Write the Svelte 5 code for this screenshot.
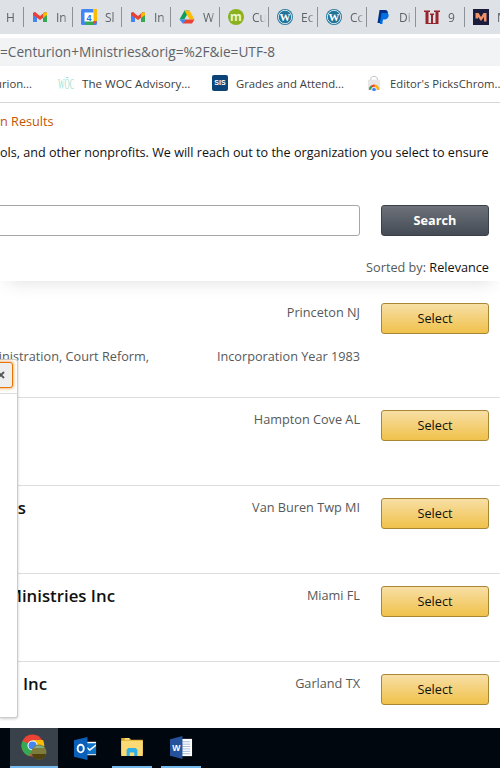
<script>
  const tabs = [
    { icon: '', title: 'H' },
    { icon: 'gmail', title: 'In' },
    { icon: 'cal', title: 'Sl' },
    { icon: 'gmail', title: 'In' },
    { icon: 'drive', title: 'W' },
    { icon: 'moz', title: 'Cu' },
    { icon: 'wp', title: 'Ec' },
    { icon: 'wp', title: 'Cc' },
    { icon: 'paypal', title: 'Di' },
    { icon: 'red', title: '9' },
    { icon: 'mm', title: 'M' }
  ];

  const rows = [
    { name: '', end: 0, place: 'Princeton NJ', first: true },
    { name: '', end: 0, place: 'Hampton Cove AL' },
    { name: 's', end: 26, place: 'Van Buren Twp MI' },
    { name: 'Ministries Inc', end: 115, place: 'Miami FL' },
    { name: 'Inc', end: 47, place: 'Garland TX' }
  ];
</script>

{#snippet tabIcon(kind)}
  {#if kind === 'gmail'}
    <svg viewBox="0 0 16 16" width="16" height="16">
      <path d="M1 13V4l2 -1 2 2v8z" fill="#4285f4" />
      <path d="M15 13V4l-2 -1 -2 2v8z" fill="#34a853" />
      <path d="M3 3l5 4 5 -4 2 1v2l-7 5 -7 -5V4z" fill="#ea4335" />
      <path d="M13 3l2 1v2l-4 3V5z" fill="#fbbc04" />
    </svg>
  {:else if kind === 'cal'}
    <svg viewBox="0 0 16 16" width="16" height="16">
      <rect width="16" height="16" rx="1.500" fill="#4285f4" />
      <rect x="12" y="0" width="4" height="12" fill="#fbbc04" />
      <rect x="4" y="12" width="8" height="4" fill="#34a853" />
      <path d="M12 12h4l-4 4z" fill="#ea4335" />
      <rect x="3.500" y="3.500" width="9" height="9" fill="#fff" />
      <text x="8" y="11.500" class="calnum">4</text>
    </svg>
  {:else if kind === 'drive'}
    <svg viewBox="0 0 16 16" width="16" height="16">
      <path d="M5.500 1.500h5L5.300 10.500H0.500z" fill="#0f9d58" />
      <path d="M10.500 1.500l5 9h-5l-5 -9z" fill="#fbbc04" />
      <path d="M3.700 14.500l2.500 -4h9.300l-2.500 4z" fill="#ea4335" />
      <path d="M0.500 10.500h5.200l2 0 -4 4z" fill="#4285f4" />
    </svg>
  {:else if kind === 'moz'}
    <svg viewBox="0 0 16 16" width="16" height="16">
      <circle cx="8" cy="8" r="8" fill="#8ab21d" />
      <text x="8" y="11.500" class="mozm">m</text>
    </svg>
  {:else if kind === 'wp'}
    <svg viewBox="0 0 16 16" width="16" height="16">
      <circle cx="8" cy="8" r="8" fill="#21759b" />
      <circle cx="8" cy="8" r="6.700" fill="none" stroke="#fff" stroke-width="0.800" />
      <text x="8" y="12" class="wpw">W</text>
    </svg>
  {:else if kind === 'paypal'}
    <svg viewBox="0 0 16 16" width="16" height="16">
      <path d="M4.500 1h5c3 0 4 2 3 4.500 -.7 2 -2.500 3 -4.500 3H6.500L5.500 14H2.500z" fill="#003087" />
      <path d="M6.500 4h4.500c2.500 0 3 1.500 2.500 3.500 -.6 2 -2 3 -4 3H8L7.300 15H4.800z" fill="#0070e0" />
    </svg>
  {:else if kind === 'red'}
    <svg viewBox="0 0 16 16" width="16" height="16" fill="#97252b">
      <path d="M0 1.500h6v1.500H4.500v11H7v-8H6V4.500h4V6H9v8h2.500V3H10V1.500h6V3h-1.500v12H1.500V3H0z" />
    </svg>
  {:else if kind === 'mm'}
    <svg viewBox="0 0 16 16" width="16" height="16">
      <rect width="16" height="16" fill="#191c3d" />
      <path d="M2.500 4h3l2.500 4 2.500 -4h3v8.500h-2.500V8L8 12 5 8v1.500H2.500z" fill="#f0916a" />
    </svg>
  {/if}
{/snippet}

<div class="screen">
  <div class="tabstrip">
    {#each tabs as tab, i}
      <div class="tab" class:first={i === 0}>
        {#if tab.icon}
          <span class="tab-icon">{@render tabIcon(tab.icon)}</span>
        {/if}
        <span class="tab-title">{tab.title}</span>
      </div>
    {/each}
  </div>

  <div class="addressbar">
    <div class="omnibox">=Centurion+Ministries&amp;orig=%2F&amp;ie=UTF-8</div>
  </div>

  <div class="bookmarks">
    <span class="bm bm-a">urion...</span>
    <span class="bm bm-b">
      <svg viewBox="0 0 16 17" width="16" height="17">
        <text x="0" y="7" transform="scale(1 2)" class="woc">WŌC</text>
      </svg>
      The WOC Advisory...
    </span>
    <span class="bm bm-c">
      <span class="sis">SIS</span>
      Grades and Attend...
    </span>
    <span class="bm bm-d">
      <svg viewBox="0 0 16 16" width="15" height="16">
        <path d="M4 5V3.500C4 2 5.500 1 7.500 1S11 2 11 3.500V5" fill="none" stroke="#bdbdbd" stroke-width="1" />
        <rect x="1" y="4.500" width="13" height="11" fill="#e6e6e6" />
        <path d="M2 15a5.500 5.500 0 0 1 11 0z" fill="#ea4335" />
        <path d="M2 15a5.500 5.500 0 0 1 2 -4l2 4z" fill="#34a853" />
        <path d="M7.500 9.500a5.500 5.500 0 0 1 5.500 5.500H10z" fill="#fbbc04" />
        <circle cx="7.500" cy="15" r="2.500" fill="#4285f4" stroke="#fff" />
      </svg>
      Editor's PicksChrom...
    </span>
  </div>

  <main class="page">
    <section class="head">
      <a class="crumb" href="#results">n Results</a>
      <p class="intro">ols, and other nonprofits. We will reach out to the organization you select to ensure</p>
      <div class="searchrow">
        <div class="searchbox"></div>
        <button class="btn-search">Search</button>
      </div>
      <div class="sorted">Sorted by: <span>Relevance</span></div>
    </section>

    {#each rows as row}
      <article class="row" class:first={row.first}>
        <div class="row-main">
          <div class="row-top">
            <div class="name" style="width: {row.end}px"><b>{row.name}</b></div>
            <div class="place">{row.place}</div>
          </div>
          {#if row.first}
            <div class="row-info">
              <span class="cause">inistration, Court Reform,</span>
              <span class="year">Incorporation Year 1983</span>
            </div>
          {/if}
        </div>
        <button class="btn-select">Select</button>
      </article>
    {/each}

    <aside class="popup">
      <div class="popup-head">
        <button class="close" aria-label="Close">
          <svg viewBox="0 0 8 8" width="8" height="8"><path d="M1 1l6 6M7 1l-6 6" stroke="#555" stroke-width="1.800" /></svg>
        </button>
      </div>
    </aside>
  </main>

  <div class="taskbar">
    <div class="task active">
      <svg viewBox="0 0 26 26" width="26" height="26">
        <circle cx="11.500" cy="11.500" r="11" fill="#ea4335" />
        <path d="M11.500 11.500L1.500 7A11 11 0 0 0 9 22.300z" fill="#34a853" />
        <path d="M11.500 6H22a11 11 0 0 1 -8 16z" fill="#fbbc04" />
        <circle cx="11.500" cy="11.500" r="5" fill="#fff" />
        <circle cx="11.500" cy="11.500" r="4" fill="#4285f4" />
        <circle cx="18" cy="18" r="7.500" fill="#7d7c3a" />
        <path d="M10.800 20a7.500 7.500 0 0 0 14.400 0z" fill="#4f430f" />
        <path d="M12.500 14a7.500 7.500 0 0 1 11 0z" fill="#7fae86" />
      </svg>
    </div>
    <div class="task outlook">
      <svg viewBox="0 0 24 24" width="23" height="23">
        <path d="M9 5h14v14H9z" fill="#fff" />
        <path d="M10 7.500l6.500 5 6.500 -5v-1H10zM10 18h13V9.500l-6.500 5 -6.500 -5z" fill="#1173c6" />
        <path d="M0 3.500L14 0v24L0 20.500z" fill="#0a5fb8" />
        <ellipse cx="7" cy="12" rx="3.200" ry="4" fill="none" stroke="#fff" stroke-width="2" />
      </svg>
    </div>
    <div class="task files underlined">
      <svg viewBox="0 0 24 20" width="22" height="18">
        <path d="M0 0h9l2 2h13v16H0z" fill="#d9a92f" />
        <rect x="0" y="3" width="24" height="17" fill="#fbd974" />
        <path d="M4 0h5v2H4z" fill="#f7e27c" />
        <path d="M8 11h8l2 2v7h-3.500v-4h-5v4H6v-7z" fill="#2fb1e8" />
      </svg>
    </div>
    <div class="task word underlined">
      <svg viewBox="0 0 24 24" width="23" height="23">
        <rect x="9" y="3" width="14" height="18" fill="#fff" />
        <path d="M12 6h9M12 8.500h9M12 11h9M12 13.500h9M12 16h9M12 18.500h9" stroke="#a4b7d8" />
        <path d="M0 3.500L13 0v24L0 20.500z" fill="#25529b" />
        <text x="6.500" y="16" class="wordw">W</text>
      </svg>
    </div>
  </div>
</div>

<style>
  :global(body) {
    margin: 0;
    background: #fff;
  }

  .screen {
    width: 500px;
    height: 768px;
    display: flex;
    flex-direction: column;
    overflow: hidden;
    font-family: "Open Sans", sans-serif;
  }

  .tabstrip {
    height: 34px;
    flex: none;
    display: flex;
    align-items: center;
    background: #dee1e6;
  }

  .tab {
    width: 49px;
    height: 20px;
    box-sizing: border-box;
    flex: none;
    display: flex;
    align-items: center;
    gap: 8px;
    padding-left: 8px;
    border-right: 1px solid #8e9197;
  }

  .tab.first {
    width: 24px;
    padding-left: 6px;
  }

  .tab-icon {
    display: flex;
    width: 16px;
    height: 16px;
  }

  .tab-title {
    font-size: 12px;
    color: #5f6368;
    width: 14px;
    overflow: hidden;
    white-space: nowrap;
    mask-image: linear-gradient(to right, #000 55%, transparent);
  }

  .calnum {
    font: bold 9px "Liberation Sans", sans-serif;
    fill: #1a73e8;
    text-anchor: middle;
  }

  .mozm {
    font: bold 12px "Open Sans", sans-serif;
    fill: #eef5d0;
    text-anchor: middle;
  }

  .wpw {
    font: bold 11px "Liberation Serif", serif;
    fill: #fff;
    text-anchor: middle;
  }

  .addressbar {
    height: 32px;
    flex: none;
    box-sizing: border-box;
    padding-top: 4px;
    background: #fff;
  }

  .omnibox {
    height: 28px;
    line-height: 28px;
    background: #f1f3f4;
    font-size: 13.650px;
    color: #5f6368;
    white-space: nowrap;
  }

  .bookmarks {
    height: 37px;
    flex: none;
    box-sizing: border-box;
    display: flex;
    align-items: center;
    padding-bottom: 2px;
    border-bottom: 1px solid #d6d6d6;
    font-size: 11.300px;
    color: #3c4043;
    white-space: nowrap;
  }

  .bm {
    display: flex;
    align-items: center;
    flex: none;
  }

  .bm-a {
    width: 63px;
    margin-left: -5px;
  }

  .bm-b {
    width: 154px;
    gap: 8px;
    font-size: 11.600px;
  }

  .bm-c {
    width: 155px;
    gap: 8px;
  }

  .bm-d {
    gap: 8px;
  }

  .woc {
    font: 7px "Liberation Serif", serif;
    fill: #9adfd2;
  }

  .sis {
    width: 16px;
    height: 16px;
    border-radius: 2px;
    background: #0c4478;
    color: #fff;
    font: bold 7px/16px "Liberation Sans", sans-serif;
    text-align: center;
  }

  .page {
    position: relative;
    flex: 1;
    min-height: 0;
    overflow: hidden;
    background: #fff;
    font-size: 12.700px;
    color: #565959;
  }

  .head {
    height: 178px;
    box-sizing: border-box;
    padding-top: 9px;
    box-shadow: 0 8px 18px -8px rgba(0, 0, 0, 0.14);
    position: relative;
  }

  .crumb {
    display: block;
    line-height: 18px;
    color: #c45500;
    text-decoration: none;
  }

  .intro {
    margin: 14px 0 0;
    font-size: 12.600px;
    line-height: 18px;
    color: #111;
    white-space: nowrap;
  }

  .searchrow {
    display: flex;
    align-items: center;
    gap: 21px;
    margin-top: 43px;
  }

  .searchbox {
    width: 370px;
    margin-left: -10px;
    height: 31px;
    box-sizing: border-box;
    border: 1px solid #a6a6a6;
    border-radius: 3px;
  }

  .btn-search,
  .btn-select {
    width: 108px;
    height: 31px;
    flex: none;
    padding: 0 0 2px;
    border-radius: 3px;
    font-family: inherit;
    font-size: 12.700px;
  }

  .btn-search {
    border: 1px solid #3a4149;
    background: linear-gradient(#6d727a, #444b54);
    color: #fff;
    font-weight: 700;
  }

  .sorted {
    margin: 22px 11px 0 0;
    text-align: right;
    line-height: 18px;
    color: #565959;
  }

  .sorted span {
    color: #111;
  }

  .row {
    height: 88px;
    box-sizing: border-box;
    display: flex;
    align-items: flex-start;
    justify-content: space-between;
    padding: 12px 11px 0 0;
    border-bottom: 1px solid #ddd;
  }

  .row.first {
    height: 117px;
    padding-top: 22px;
  }

  .row-main {
    width: 360px;
  }

  .row-top {
    display: flex;
    justify-content: space-between;
    align-items: center;
    height: 18px;
  }

  .name {
    display: flex;
    justify-content: flex-end;
    white-space: nowrap;
    font-size: 16.800px;
    color: #0f1111;
  }

  .name b {
    font-weight: 600;
  }

  .place {
    line-height: 18px;
  }

  .row-info {
    display: flex;
    justify-content: space-between;
    margin-top: 26px;
    line-height: 18px;
    white-space: nowrap;
  }

  .cause {
    margin-left: -14px;
    width: 163px;
    text-align: right;
  }

  .btn-select {
    border: 1px solid #a88734;
    background: linear-gradient(#f7dfa5, #f0c14b);
    color: #111;
  }

  .popup {
    position: absolute;
    left: 0;
    top: 256px;
    width: 18px;
    height: 359px;
    box-sizing: border-box;
    background: #fff;
    border: 1px solid #ccc;
    border-left: 0;
    border-radius: 0 3px 3px 0;
    box-shadow: 0 1px 3px rgba(0, 0, 0, 0.2);
  }

  .popup-head {
    position: relative;
    height: 33px;
    border-bottom: 1px solid #ddd;
  }

  .close {
    position: absolute;
    right: 4px;
    top: 2px;
    width: 26px;
    height: 26px;
    padding: 0 0 0 9px;
    display: flex;
    align-items: center;
    background: #eee;
    border: 1px solid #e77600;
    border-radius: 3px;
    box-shadow: 0 0 3px 1px rgba(228, 121, 17, 0.5);
  }

  .taskbar {
    height: 40px;
    flex: none;
    display: flex;
    padding-left: 10px;
    background: #01070f;
  }

  .task {
    box-sizing: border-box;
    height: 40px;
    display: flex;
    align-items: center;
    justify-content: center;
  }

  .task.active {
    width: 48px;
    background: #39414a;
    border-bottom: 2px solid #76b9ed;
  }

  .task.outlook {
    width: 54px;
  }

  .task.files {
    width: 40px;
  }

  .task.word {
    width: 40px;
    margin-left: 9px;
  }

  .task.underlined {
    border-bottom: 2px solid #76b9ed;
  }

  .wordw {
    font: bold 9px "Liberation Sans", sans-serif;
    fill: #fff;
    text-anchor: middle;
  }
</style>
